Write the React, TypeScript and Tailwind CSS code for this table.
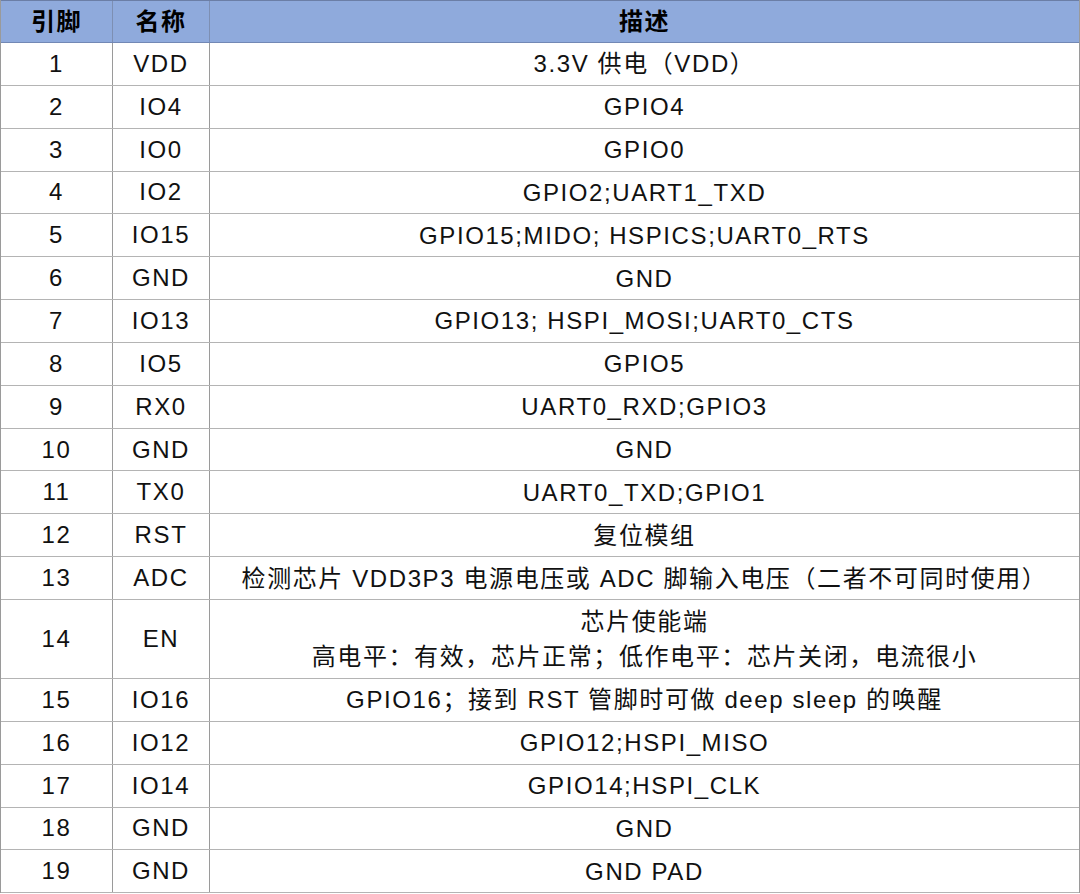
type Pin = {
  no: string;
  name: string;
  desc: string[];
  tall?: boolean;
};

const pins: Pin[] = [
  { no: "1", name: "VDD", desc: ["3.3V 供电（VDD）"] },
  { no: "2", name: "IO4", desc: ["GPIO4"] },
  { no: "3", name: "IO0", desc: ["GPIO0"] },
  { no: "4", name: "IO2", desc: ["GPIO2;UART1_TXD"] },
  { no: "5", name: "IO15", desc: ["GPIO15;MIDO; HSPICS;UART0_RTS"] },
  { no: "6", name: "GND", desc: ["GND"] },
  { no: "7", name: "IO13", desc: ["GPIO13; HSPI_MOSI;UART0_CTS"] },
  { no: "8", name: "IO5", desc: ["GPIO5"] },
  { no: "9", name: "RX0", desc: ["UART0_RXD;GPIO3"] },
  { no: "10", name: "GND", desc: ["GND"] },
  { no: "11", name: "TX0", desc: ["UART0_TXD;GPIO1"] },
  { no: "12", name: "RST", desc: ["复位模组"] },
  { no: "13", name: "ADC", desc: ["检测芯片 VDD3P3 电源电压或 ADC 脚输入电压（二者不可同时使用）"] },
  {
    no: "14",
    name: "EN",
    desc: ["芯片使能端", "高电平：有效，芯片正常；低作电平：芯片关闭，电流很小"],
    tall: true,
  },
  { no: "15", name: "IO16", desc: ["GPIO16；接到 RST 管脚时可做 deep sleep 的唤醒"] },
  { no: "16", name: "IO12", desc: ["GPIO12;HSPI_MISO"] },
  { no: "17", name: "IO14", desc: ["GPIO14;HSPI_CLK"] },
  { no: "18", name: "GND", desc: ["GND"] },
  { no: "19", name: "GND", desc: ["GND PAD"] },
];

const font = {
  fontFamily: '"Liberation Sans", "Noto Sans CJK SC", sans-serif',
};

export default function App() {
  return (
    <div
      className="w-[1080px] h-[894px] bg-white overflow-hidden text-[24px] tracking-[1.6px] text-[#111]"
      style={font}
    >
      <div className="border-l border-r border-[#9a9a9a]">
        <div className="flex h-[43px] bg-[#8faadc] border-t border-t-[#6b7ea6] border-b border-b-[#7288b5] font-bold text-black">
          <div className="w-[112px] flex items-center justify-center border-r border-[#7d8fb3]">引脚</div>
          <div className="w-[97px] flex items-center justify-center border-r border-[#7d8fb3]">名称</div>
          <div className="flex-1 flex items-center justify-center">描述</div>
        </div>
        {pins.map((pin) => (
          <div
            key={pin.no}
            className={`flex border-b border-[#b4b4b4] ${pin.tall ? "h-[79px]" : "h-[42.85px]"}`}
          >
            <div className="w-[112px] flex items-center justify-center border-r border-[#9a9a9a]">
              {pin.no}
            </div>
            <div className="w-[97px] flex items-center justify-center border-r border-[#9a9a9a]">
              {pin.name}
            </div>
            <div className="flex-1 flex flex-col items-center justify-center leading-[35px]">
              {pin.desc.map((line, i) => (
                <span key={i}>{line}</span>
              ))}
            </div>
          </div>
        ))}
      </div>
    </div>
  );
}
